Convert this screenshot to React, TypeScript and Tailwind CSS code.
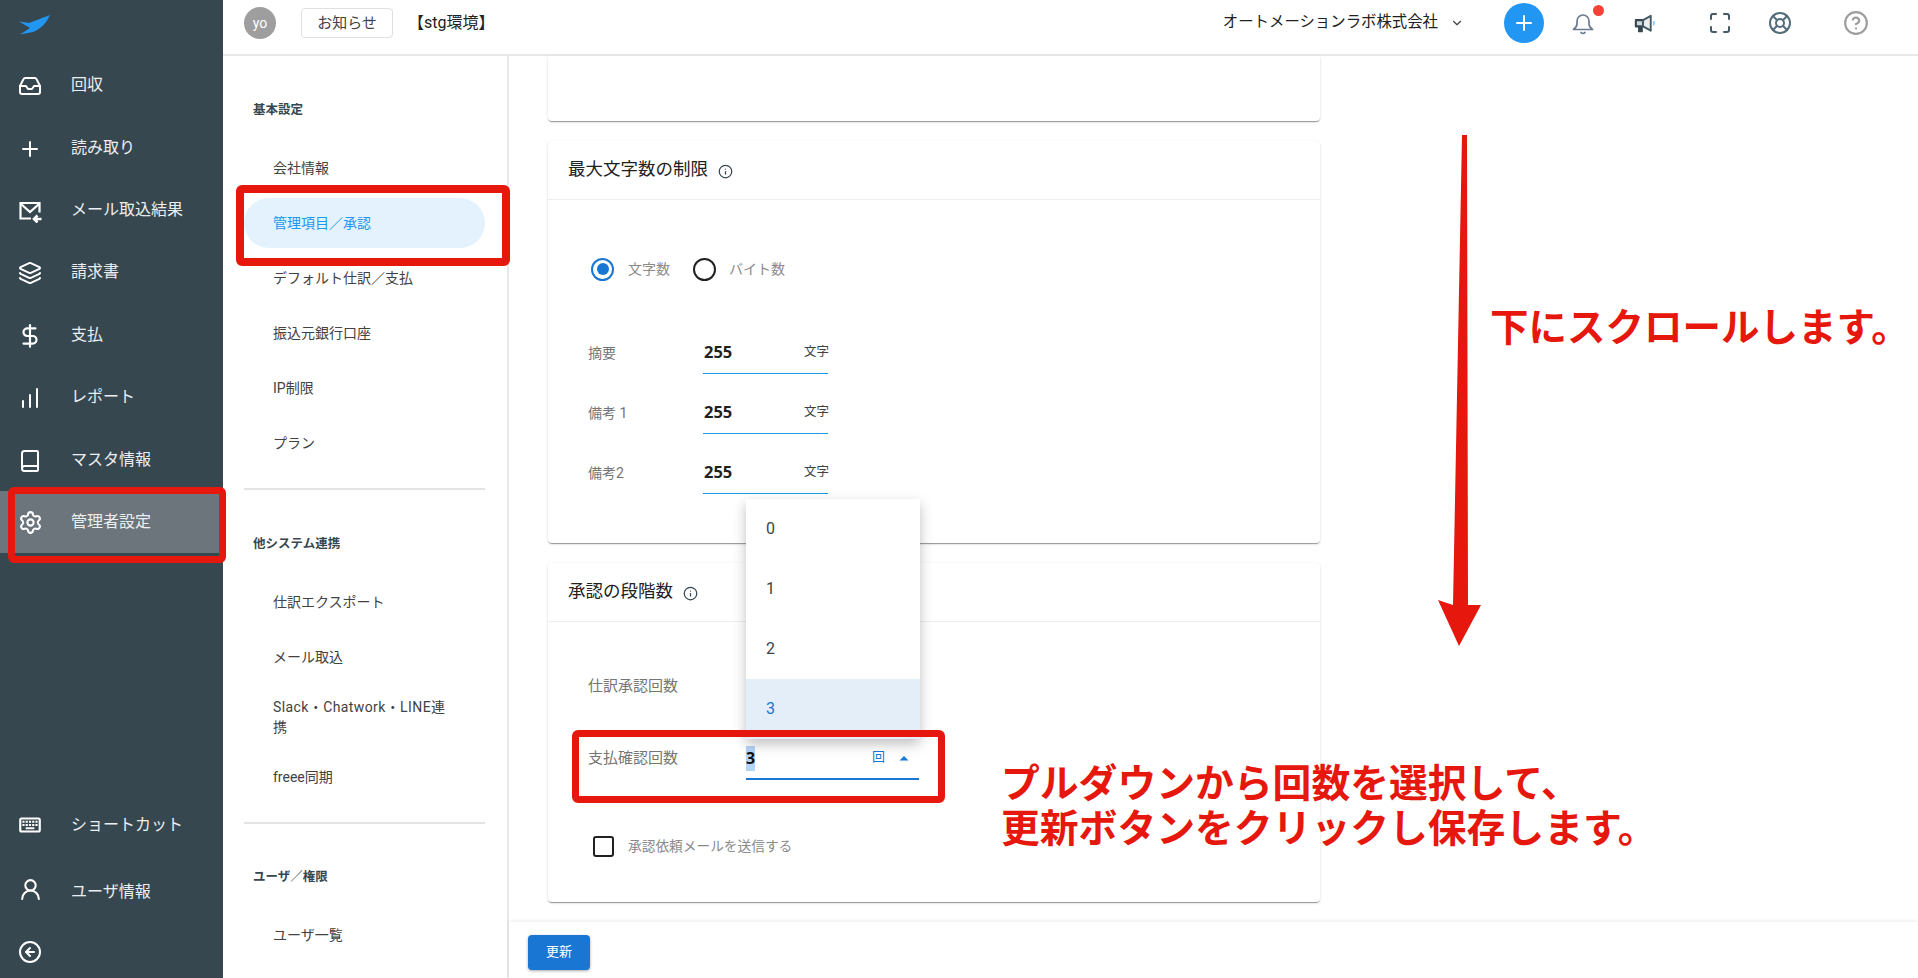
import { Inbox, Plus, Layers, DollarSign, Book, Settings, UserRound, CircleArrowLeft, Maximize, LifeBuoy, CircleHelp, Info, ChevronDown, ChartNoAxesColumnIncreasing } from "lucide-react";
import { MdOutlineKeyboard } from "react-icons/md";
import type { ReactNode } from "react";

function MailIn() {
  return (
    <svg width="24" height="24" viewBox="0 0 24 24" fill="none" stroke="currentColor" strokeWidth="2.200">
      <path d="M13 19.500H2.500V4h19v9.500" />
      <path d="M3 5l9 8 9-8" />
      <path d="M23.500 20h-7M19.500 16.500 16 20l3.500 3.500" strokeWidth="2.600" />
    </svg>
  );
}

function Megaphone() {
  return (
    <svg width="23" height="23" viewBox="0 0 24 24" fill="none">
      <path d="M3 8.500h7.500v6.500H3z" fill="#cfd8dc" stroke="#37474f" strokeWidth="2.200" strokeLinejoin="round" />
      <path d="M6 15.500v5h3.500v-5" fill="#37474f" stroke="#37474f" strokeWidth="1.500" />
      <path d="M10.500 8.500 18.500 4v15.500l-8-4.500z" fill="#eceff1" stroke="#455a64" strokeWidth="2" strokeLinejoin="round" />
      <path d="M21.500 9.500c.8 1.500.8 3 0 4.500" stroke="#90caf9" strokeWidth="2" />
    </svg>
  );
}

function BellIcon() {
  return (
    <svg width="24" height="24" viewBox="0 0 24 24" fill="none" stroke="#6b7a90" strokeWidth="1.700" strokeLinecap="round" strokeLinejoin="round">
      <path d="M2.500 18.500c2-1.500 3.500-3 3.500-5.500V10a6 6 0 0 1 12 0v3c0 2.500 1.500 4 3.500 5.500z" />
      <path d="M10 21.500c1 1.200 3 1.200 4 0" />
    </svg>
  );
}

function NavRow({ icon, label, active }: { icon: ReactNode; label: string; active?: boolean }) {
  return (
    <div className={`flex h-[62.4px] shrink-0 items-center ${active ? "bg-[#6b757b]" : ""}`}>
      <div className="mt-[2px] flex w-[71px] justify-center pr-[11px] text-white">{icon}</div>
      <span className="text-[16px] text-[#eceff1]">{label}</span>
    </div>
  );
}

function SubItem({ label, active, tall }: { label: ReactNode; active?: boolean; tall?: boolean }) {
  return (
    <div
      className={`mb-[5px] flex items-center rounded-[25px] pl-[29px] pr-[10px] text-[14px] ${tall ? "h-[60px] leading-[20px]" : "h-[50px]"} ${active ? "bg-[#e3f2fd] text-[#2196f3]" : "text-[#424242]"}`}
    >
      <span>{label}</span>
    </div>
  );
}

function SubHeading({ label, mt, mb }: { label: string; mt: string; mb: string }) {
  return <div className={`ml-[9px] flex h-[20px] items-center text-[12.500px] font-bold text-[#37474f] ${mt} ${mb}`}>{label}</div>;
}

function LimitRow({ label }: { label: string }) {
  return (
    <div className="flex h-[60px] items-start">
      <div className="flex h-[44px] w-[115px] items-center text-[14px] text-[#757575]">{label}</div>
      <div className="flex h-[43px] w-[125px] items-center border-b border-[#1e9be0] pl-[1px]">
        <span className="font-['Open_Sans',sans-serif] text-[16.500px] font-bold text-[#212121]">255</span>
        <span className="ml-auto -mr-[1px] text-[12.500px] text-[#424242]">文字</span>
      </div>
    </div>
  );
}

function CardHead({ title }: { title: string }) {
  return (
    <div className="flex h-[59px] items-center gap-[10px] border-b border-[#eeeeee] pb-[1px] pl-[20px] text-[17.500px] text-[#212121]">
      <span>{title}</span>
      <Info size={15} className="mt-[3px] text-[#37474f]" />
    </div>
  );
}

export default function App() {
  const card = "rounded-[4px] bg-white shadow-[0_2px_1px_-1px_rgba(0,0,0,0.25),0_1px_1px_0_rgba(0,0,0,0.14),0_1px_3px_0_rgba(0,0,0,0.12)]";
  return (
    <div className="relative flex h-[978px] w-[1918px] overflow-hidden bg-white font-['Roboto','Noto_Sans_CJK_JP',sans-serif]">
      <aside className="flex w-[223px] shrink-0 flex-col bg-[#37474f]">
        <div className="h-[54px] shrink-0 pl-[19px] pt-[15px]">
          <svg width="32" height="20" viewBox="0 0 32 20">
            <path d="M0 6.500 10 8 31 0C28 7 22 14 14 17L1 19.500 11 13Z" fill="#2196f3" />
          </svg>
        </div>
        <NavRow icon={<Inbox size={24} />} label="回収" />
        <NavRow icon={<Plus size={24} />} label="読み取り" />
        <NavRow icon={<MailIn />} label="メール取込結果" />
        <NavRow icon={<Layers size={24} />} label="請求書" />
        <NavRow icon={<DollarSign size={26} />} label="支払" />
        <NavRow icon={<ChartNoAxesColumnIncreasing size={24} />} label="レポート" />
        <NavRow icon={<Book size={24} />} label="マスタ情報" />
        <NavRow icon={<Settings size={25} />} label="管理者設定" active />
        <div className="mt-auto flex flex-col">
          <div className="flex h-[67px] items-center">
            <div className="flex w-[71px] justify-center pr-[11px] text-white"><MdOutlineKeyboard size={26} /></div>
            <span className="text-[16px] text-[#eceff1]">ショートカット</span>
          </div>
          <div className="flex h-[67px] items-center">
            <div className="mb-[4px] flex w-[71px] justify-center pr-[11px] text-white"><UserRound size={25} /></div>
            <span className="text-[16px] text-[#eceff1]">ユーザ情報</span>
          </div>
          <div className="flex h-[53px] items-center">
            <div className="flex w-[71px] justify-center pr-[11px] text-white"><CircleArrowLeft size={24} /></div>
          </div>
        </div>
      </aside>

      <div className="flex min-w-0 flex-1 flex-col">
        <header className="flex h-[56px] shrink-0 items-center border-b-2 border-[#e8e8e8] pb-[8px] pl-[21px]">
          <div className="flex h-[32px] w-[32px] items-center justify-center rounded-full bg-[#9e9e9e] text-[14px] text-white">yo</div>
          <div className="ml-[25px] flex h-[30px] w-[92px] items-center justify-center rounded-[4px] border border-[#e0e0e0] text-[15px] text-[#424242]">お知らせ</div>
          <div className="ml-[15px] text-[16px] text-[#212121]">【stg環境】</div>
          <div className="ml-auto flex items-center">
            <span className="text-[15.400px] text-[#212121]">オートメーションラボ株式会社</span>
            <ChevronDown size={14} className="ml-[12px] text-[#424242]" />
            <div className="ml-[40px] flex h-[40px] w-[40px] items-center justify-center rounded-full bg-[#2196f3] text-white"><Plus size={24} /></div>
            <div className="relative ml-[27px]">
              <BellIcon />
              <span className="absolute -right-[9px] -top-[6px] h-[11px] w-[11px] rounded-full bg-[#f44336]" />
            </div>
            <div className="ml-[38px]"><Megaphone /></div>
            <div className="ml-[52px] text-[#455a64]"><Maximize size={24} strokeWidth={2} /></div>
            <div className="ml-[36px] text-[#546e7a]"><LifeBuoy size={24} /></div>
            <div className="ml-[51px] mr-[49px] text-[#9e9e9e]"><CircleHelp size={26} /></div>
          </div>
        </header>

        <div className="flex min-h-0 flex-1">
          <nav className="w-[286px] shrink-0 overflow-hidden border-r-2 border-[#e8e8e8] pl-[21px] pr-[22px]">
            <SubHeading label="基本設定" mt="mt-[44px]" mb="mb-[23px]" />
            <SubItem label="会社情報" />
            <SubItem label="管理項目／承認" active />
            <SubItem label="デフォルト仕訳／支払" />
            <SubItem label="振込元銀行口座" />
            <SubItem label="IP制限" />
            <SubItem label="プラン" />
            <div className="mt-[20px] h-[2px] bg-[#e4e4e4]" />
            <SubHeading label="他システム連携" mt="mt-[44px]" mb="mb-[23px]" />
            <SubItem label="仕訳エクスポート" />
            <SubItem label="メール取込" />
            <SubItem
              label={
                <span className="tracking-[0.4px]">
                  Slack・Chatwork・LINE連
                  <br />
                  携
                </span>
              }
              tall
            />
            <SubItem label="freee同期" />
            <div className="mt-[20px] h-[2px] bg-[#e4e4e4]" />
            <SubHeading label="ユーザ／権限" mt="mt-[43px]" mb="mb-[23px]" />
            <SubItem label="ユーザ一覧" />
          </nav>

          <main className="flex min-w-0 flex-1 flex-col">
            <div className="flex min-h-0 flex-1 flex-col gap-[20px] pl-[39px]">
              <div className={`${card} h-[65px] w-[772px] rounded-t-none`} />

              <section className={`${card} h-[402px] w-[772px]`}>
                <CardHead title="最大文字数の制限" />
                <div className="pl-[40px] pt-[57px]">
                  <div className="mb-[50px] flex h-[24px] items-center pl-[3px] text-[14px] text-[#8a8a8a]">
                    <span className="flex h-[23px] w-[23px] items-center justify-center rounded-full border-[2.500px] border-[#1976d2]">
                      <span className="h-[12px] w-[12px] rounded-full bg-[#1976d2]" />
                    </span>
                    <span className="ml-[14px]">文字数</span>
                    <span className="ml-[23px] h-[23px] w-[23px] rounded-full border-[2.500px] border-[#212121]" />
                    <span className="ml-[13px]">バイト数</span>
                  </div>
                  <LimitRow label="摘要" />
                  <LimitRow label="備考 1" />
                  <LimitRow label="備考2" />
                </div>
              </section>

              <section className={`${card} h-[339px] w-[772px]`}>
                <CardHead title="承認の段階数" />
                <div className="pl-[40px] pt-[44px]">
                  <div className="flex h-[72px] items-start">
                    <div className="flex h-[40px] w-[158px] items-center text-[15px] text-[#757575]">仕訳承認回数</div>
                  </div>
                  <div className="flex h-[72px] items-start">
                    <div className="flex h-[40px] w-[158px] items-center text-[15px] text-[#757575]">支払確認回数</div>
                    <div className="relative flex h-[42px] w-[173px] items-center border-b-2 border-[#1976d2]">
                      <span className="bg-[#b3d4f7] font-['Open_Sans',sans-serif] text-[16px] font-bold leading-[25px] text-[#111111]">3</span>
                      <span className="absolute right-[34px] top-[10px] text-[13px] leading-[18px] text-[#1976d2]">回</span>
                      <svg className="absolute right-[9px] top-[17px]" width="12" height="6" viewBox="0 0 12 6">
                        <path d="M6 1 10.500 5.500H1.500Z" fill="#1976d2" />
                      </svg>
                      <div className="absolute bottom-[39px] left-0 z-10 w-[174px] bg-white text-[16px] text-[#424242] shadow-[0_5px_12px_rgba(0,0,0,0.25)]">
                        <div className="flex h-[60px] items-center pl-[20px]">0</div>
                        <div className="flex h-[60px] items-center pl-[20px]">1</div>
                        <div className="flex h-[60px] items-center pl-[20px]">2</div>
                        <div className="flex h-[60px] items-center bg-[#e3eef8] pl-[20px] text-[#1976d2]">3</div>
                      </div>
                    </div>
                  </div>
                  <div className="mt-[26px] flex items-center pl-[5px]">
                    <span className="h-[21px] w-[21px] rounded-[3px] border-2 border-[#212121]" />
                    <span className="ml-[14px] text-[13.700px] text-[#8a8a8a]">承認依頼メールを送信する</span>
                  </div>
                </div>
              </section>
            </div>
            <footer className="flex h-[56px] shrink-0 items-center bg-white pl-[19px] pt-[4px] shadow-[0_-1px_4px_rgba(0,0,0,0.08)]">
              <button className="h-[35px] w-[62px] rounded-[4px] bg-[#1976d2] text-[13px] text-white shadow-[0_1px_3px_rgba(0,0,0,0.35)]">更新</button>
            </footer>
          </main>
        </div>
      </div>

      <div className="pointer-events-none absolute left-[8px] top-[487px] z-20 h-[76px] w-[218px] rounded-[6px] border-[7px] border-[#e6170d]" />
      <div className="pointer-events-none absolute left-[236px] top-[185px] z-20 h-[81px] w-[274px] rounded-[6px] border-[8px] border-[#e6170d]" />
      <div className="pointer-events-none absolute left-[572px] top-[730px] z-20 h-[73px] w-[373px] rounded-[6px] border-[7px] border-[#e6170d]" />

      <svg className="pointer-events-none absolute left-[1430px] top-[130px] z-20" width="60" height="520" viewBox="1430 130 60 520">
        <path d="M1462 135H1467L1468 605H1481L1459 646 1438 600 1453 605Z" fill="#e6170d" />
      </svg>
      <div className="absolute left-[1490px] top-[297px] z-20 whitespace-nowrap font-['Noto_Sans_CJK_JP',sans-serif] text-[38.500px] font-bold leading-[54px] text-[#e6170d]">下にスクロールします。</div>
      <div className="absolute left-[1001px] top-[758px] z-20 whitespace-nowrap font-['Noto_Sans_CJK_JP',sans-serif] text-[38.800px] font-bold leading-[45px] text-[#e6170d]">
        プルダウンから回数を選択して、
        <br />
        更新ボタンをクリックし保存します。
      </div>
    </div>
  );
}
